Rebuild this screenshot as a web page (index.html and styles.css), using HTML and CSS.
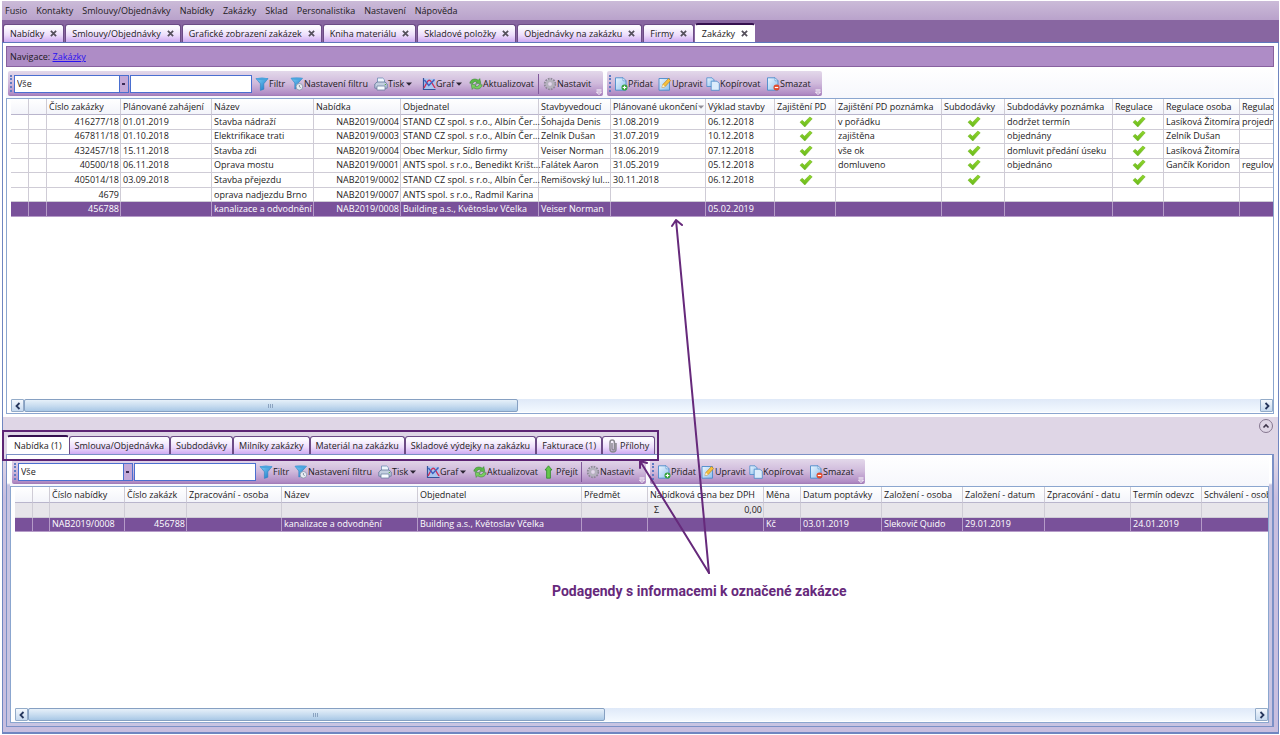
FILE: index.html
```html
<!DOCTYPE html>
<html lang="cs">
<head>
<meta charset="utf-8">
<title>Zakázky</title>
<link rel="stylesheet" href="styles.css">
</head>
<body>
<svg class="defs" aria-hidden="true">
  <defs>
    <linearGradient id="gBlue" x1="0" y1="0" x2="1" y2="1"><stop offset="0" stop-color="#7fd0f7"/><stop offset="1" stop-color="#1274c4"/></linearGradient>
    <linearGradient id="gPage" x1="0" y1="0" x2="1" y2="1"><stop offset="0" stop-color="#eaf5ff"/><stop offset="1" stop-color="#8fc0ec"/></linearGradient>
    <linearGradient id="gCheck" x1="0" y1="0" x2="0" y2="1"><stop offset="0" stop-color="#93d82c"/><stop offset="1" stop-color="#66b81a"/></linearGradient>
  </defs>
  <symbol id="i-filter" viewBox="0 0 14 14"><path d="M1 1.500h12L8.800 6.800v5.400L5.400 13.400V6.800z" fill="url(#gBlue)" stroke="#2b7fc0" stroke-width=".6"/><ellipse cx="7" cy="1.900" rx="6" ry="1.300" fill="#4ba3dd"/></symbol>
  <symbol id="i-filterset" viewBox="0 0 14 14"><path d="M1 1.200h11.500L8.200 6v5L4.800 12V6z" fill="url(#gBlue)" stroke="#2b7fc0" stroke-width=".6"/><ellipse cx="6.700" cy="1.600" rx="5.800" ry="1.200" fill="#4ba3dd"/><circle cx="9.400" cy="9.800" r="3.300" fill="#e9eef4" stroke="#8796a8" stroke-width=".8"/><path d="M9.400 8v1.800l1.300.8" fill="none" stroke="#607184" stroke-width=".7"/></symbol>
  <symbol id="i-print" viewBox="0 0 14 14"><path d="M3.500 6V1h5.200l1.800 1.800V6" fill="#eef5fc" stroke="#6f8db5" stroke-width=".8"/><path d="M.8 7 3 5h8l2.200 2v4.200H.8z" fill="#c3cfe0" stroke="#5f7598" stroke-width=".8"/><path d="M3 9h8v4H3z" fill="#f7fbff" stroke="#5f7598" stroke-width=".7"/><path d="M10.800 7.600H12" stroke="#49a83c"/></symbol>
  <symbol id="i-graph" viewBox="0 0 14 14"><path d="M2 1.500v10.500h11V2z" fill="#a9c4ee"/><path d="M1.500 1v11.500H13.500" fill="none" stroke="#34539a" stroke-width="1.200"/><path d="m2 11 3.500-6.500c1-1.600 2.500-1.600 3.500 0L13 11" fill="none" stroke="#d02d58" stroke-width="1.400"/><path d="m2.400 3 4.400 5.400L12.500 2.500" fill="none" stroke="#3b5fc0" stroke-width="1.400"/></symbol>
  <symbol id="i-refresh" viewBox="0 0 14 14"><path d="M.8 6.200C1.400 2.200 6 .8 9.300 3.200L10.800 1.600l1 5-5.200-.3 1.500-1.400C6.400 3.900 4.500 4.500 3.800 6.500z" fill="#5cb947" stroke="#2f7f2b" stroke-width=".5"/><path d="M13.200 7.800c-.6 4-5.200 5.400-8.500 3L3.200 12.400l-1-5 5.200.3-1.500 1.400c1.700 1 3.600.4 4.300-1.600z" fill="#79cf60" stroke="#2f7f2b" stroke-width=".5"/></symbol>
  <symbol id="i-gear" viewBox="0 0 14 14"><circle cx="7" cy="7" r="5.200" fill="none" stroke="#8d8a96" stroke-width="2" stroke-dasharray="1.700 1.020"/><circle cx="7" cy="7" r="3.300" fill="none" stroke="#b4b2bd" stroke-width="2.400"/><circle cx="7" cy="7" r="1.700" fill="#e2dae9"/></symbol>
  <symbol id="i-page" viewBox="0 0 14 14"><path d="M1.500.8h7.500L12 3.800v9.400H1.500z" fill="url(#gPage)" stroke="#4a8ac9" stroke-width=".9"/><path d="M9 .8v3h3z" fill="#fff" stroke="#4a8ac9" stroke-width=".6"/></symbol>
  <symbol id="i-add" viewBox="0 0 14 14"><use href="#i-page"/><circle cx="10.500" cy="10.500" r="3" fill="#35a13b"/><path d="M10.500 8.700v3.600M8.700 10.500h3.600" stroke="#fff" stroke-width="1.200"/></symbol>
  <symbol id="i-edit" viewBox="0 0 14 14"><path d="M1 1.500h10.500v11.700H1z" fill="url(#gPage)" stroke="#4a8ac9" stroke-width=".9"/><path d="m4 10.500.8-3L10.500 1.500l2.200 2L7 9.700z" fill="#f6c03c" stroke="#b27a1e" stroke-width=".6"/><path d="m4 10.500.8-3L7 9.700z" fill="#fff0cf"/></symbol>
  <symbol id="i-copy" viewBox="0 0 14 14"><path d="M.8.800h5.200l2 2v6.700H.8z" fill="url(#gPage)" stroke="#4a8ac9" stroke-width=".8"/><path d="M5.200 4.200H11l2.300 2.300v6.800H5.200z" fill="#dcecfb" stroke="#4a8ac9" stroke-width=".8"/></symbol>
  <symbol id="i-delete" viewBox="0 0 14 14"><use href="#i-page"/><circle cx="10.500" cy="10.500" r="3" fill="#e0492b"/><path d="M8.800 10.500h3.400" stroke="#fff" stroke-width="1.200"/></symbol>
  <symbol id="i-go" viewBox="0 0 14 14"><path d="M6.500.8 10 5H8.400v8.200H4.600V5H3z" fill="#66c64c" stroke="#2f8a2b" stroke-width=".8"/></symbol>
  <symbol id="i-clip" viewBox="0 0 10 14"><path d="M8 4v6a3 3 0 0 1-6 0V3.300a2.200 2.200 0 0 1 4.400 0v6.500a1.200 1.200 0 0 1-2.400 0V4" fill="none" stroke="#8b8991" stroke-width="1.500"/></symbol>
  <symbol id="i-x" viewBox="0 0 8 8"><path d="M1 1 7 7M7 1 1 7" stroke="#55505c" stroke-width="2"/></symbol>
  <symbol id="i-caret" viewBox="0 0 6 4"><path d="M0 .5h6L3 3.800z" fill="#2b2433"/></symbol>
  <symbol id="i-check" viewBox="0 0 14 12"><path d="M1 6.200 3.200 4.300 5.500 6.300 10.800 1 13.200 2.800 5.800 11z" fill="url(#gCheck)" stroke="#6fb424" stroke-width=".6" stroke-linejoin="round"/></symbol>
  <symbol id="i-more" viewBox="0 0 6 6"><path d="M.5 1h5" stroke="#fff"/><path d="M.5 3h5L3 5.600z" fill="none" stroke="#fff" stroke-width=".9"/></symbol>
  <symbol id="i-left" viewBox="0 0 8 8"><path d="M5.500 1 2.500 4l3 3" fill="none" stroke="#26365c" stroke-width="1.800"/></symbol>
  <symbol id="i-right" viewBox="0 0 8 8"><path d="m2.500 1 3 3-3 3" fill="none" stroke="#26365c" stroke-width="1.800"/></symbol>
  <symbol id="i-up" viewBox="0 0 8 8"><path d="M1.500 5.500 4 3l2.500 2.500" fill="none" stroke="#3c3348" stroke-width="1.600"/></symbol>
</svg>

<div class="app">
  <nav class="menu" aria-label="Hlavní nabídka">
    <button>Fusio</button><button>Kontakty</button><button>Smlouvy/Objednávky</button><button>Nabídky</button><button>Zakázky</button><button>Sklad</button><button>Personalistika</button><button>Nastavení</button><button>Nápověda</button>
  </nav>

  <div class="tabs" role="tablist">
    <button class="tab" role="tab">Nabídky<svg class="x"><use href="#i-x"/></svg></button>
    <button class="tab" role="tab">Smlouvy/Objednávky<svg class="x"><use href="#i-x"/></svg></button>
    <button class="tab" role="tab">Grafické zobrazení zakázek<svg class="x"><use href="#i-x"/></svg></button>
    <button class="tab" role="tab">Kniha materiálu<svg class="x"><use href="#i-x"/></svg></button>
    <button class="tab" role="tab">Skladové položky<svg class="x"><use href="#i-x"/></svg></button>
    <button class="tab" role="tab">Objednávky na zakázku<svg class="x"><use href="#i-x"/></svg></button>
    <button class="tab" role="tab">Firmy<svg class="x"><use href="#i-x"/></svg></button>
    <button class="tab active" role="tab" aria-selected="true">Zakázky<svg class="x"><use href="#i-x"/></svg></button>
  </div>

  <main class="frame">
    <section class="upper">
      <div class="crumbs">Navigace: <a href="#">Zakázky</a></div>
      <div class="toolrow">
        <div class="toolbar">
          <span class="grip"></span>
          <select class="view" aria-label="Pohled"><option>Vše</option></select>
          <input class="search" type="text" aria-label="Hledat">
          <button class="tool w-filter"><svg><use href="#i-filter"/></svg>Filtr</button>
          <button class="tool w-set"><svg><use href="#i-filterset"/></svg>Nastavení filtru</button>
          <button class="tool w-print"><svg><use href="#i-print"/></svg>Tisk<svg class="caret"><use href="#i-caret"/></svg></button>
          <button class="tool w-graph"><svg><use href="#i-graph"/></svg>Graf<svg class="caret"><use href="#i-caret"/></svg></button>
          <button class="tool w-refresh"><svg><use href="#i-refresh"/></svg>Aktualizovat</button>
          <span class="sep"></span>
          <button class="tool w-conf"><svg><use href="#i-gear"/></svg>Nastavit</button>
          <svg class="more"><use href="#i-more"/></svg>
        </div>
        <div class="toolbar">
          <span class="grip wide"></span>
          <button class="tool w-add"><svg><use href="#i-add"/></svg>Přidat</button>
          <button class="tool w-edit"><svg><use href="#i-edit"/></svg>Upravit</button>
          <button class="tool w-copy"><svg><use href="#i-copy"/></svg>Kopírovat</button>
          <button class="tool w-del"><svg><use href="#i-delete"/></svg>Smazat</button>
          <svg class="more"><use href="#i-more"/></svg>
        </div>
      </div>
      <div class="gridbox">
        <div class="scroller">
        <table class="grid orders">
          <colgroup><col class="c18"><col class="c18"><col class="c74"><col class="c91"><col class="c102"><col class="c87"><col class="c138"><col class="c72"><col class="c95"><col class="c69"><col class="c61"><col class="c106"><col class="c63"><col class="c108"><col class="c51"><col class="c76"><col class="c90"></colgroup>
          <thead><tr><th></th><th></th><th>Číslo zakázky</th><th>Plánované zahájení</th><th>Název</th><th>Nabídka</th><th>Objednatel</th><th>Stavbyvedoucí</th><th class="sorted">Plánované ukončení<svg class="caret"><use href="#i-caret"/></svg></th><th>Výklad stavby</th><th>Zajištění PD</th><th>Zajištění PD poznámka</th><th>Subdodávky</th><th>Subdodávky poznámka</th><th>Regulace</th><th>Regulace osoba</th><th>Regulace</th></tr></thead>
          <tbody>
            <tr><td></td><td></td><td class="r">416277/18</td><td>01.01.2019</td><td>Stavba nádraží</td><td class="r">NAB2019/0004</td><td>STAND CZ spol. s r.o., Albín Čer...</td><td>Šohajda Denis</td><td>31.08.2019</td><td>06.12.2018</td><td class="ok"><svg><use href="#i-check"/></svg></td><td>v pořádku</td><td class="ok"><svg><use href="#i-check"/></svg></td><td>dodržet termín</td><td class="ok"><svg><use href="#i-check"/></svg></td><td>Lasíková Žitomíra</td><td>projedn</td></tr>
            <tr><td></td><td></td><td class="r">467811/18</td><td>01.10.2018</td><td>Elektrifikace trati</td><td class="r">NAB2019/0003</td><td>STAND CZ spol. s r.o., Albín Čer...</td><td>Zelník Dušan</td><td>31.07.2019</td><td>10.12.2018</td><td class="ok"><svg><use href="#i-check"/></svg></td><td>zajištěna</td><td class="ok"><svg><use href="#i-check"/></svg></td><td>objednány</td><td class="ok"><svg><use href="#i-check"/></svg></td><td>Zelník Dušan</td><td></td></tr>
            <tr><td></td><td></td><td class="r">432457/18</td><td>15.11.2018</td><td>Stavba zdi</td><td class="r">NAB2019/0004</td><td>Obec Merkur, Sídlo firmy</td><td>Veiser Norman</td><td>18.06.2019</td><td>07.12.2018</td><td class="ok"><svg><use href="#i-check"/></svg></td><td>vše ok</td><td class="ok"><svg><use href="#i-check"/></svg></td><td>domluvit předání úseku</td><td class="ok"><svg><use href="#i-check"/></svg></td><td>Lasíková Žitomíra</td><td></td></tr>
            <tr><td></td><td></td><td class="r">40500/18</td><td>06.11.2018</td><td>Oprava mostu</td><td class="r">NAB2019/0001</td><td>ANTS spol. s r.o., Benedikt Krišt...</td><td>Falátek Aaron</td><td>31.05.2019</td><td>05.12.2018</td><td class="ok"><svg><use href="#i-check"/></svg></td><td>domluveno</td><td class="ok"><svg><use href="#i-check"/></svg></td><td>objednáno</td><td class="ok"><svg><use href="#i-check"/></svg></td><td>Gančík Koridon</td><td>regulov</td></tr>
            <tr><td></td><td></td><td class="r">405014/18</td><td>03.09.2018</td><td>Stavba přejezdu</td><td class="r">NAB2019/0002</td><td>STAND CZ spol. s r.o., Albín Čer...</td><td>Remišovský Iul...</td><td>30.11.2018</td><td>06.12.2018</td><td class="ok"><svg><use href="#i-check"/></svg></td><td></td><td class="ok"><svg><use href="#i-check"/></svg></td><td></td><td class="ok"><svg><use href="#i-check"/></svg></td><td></td><td></td></tr>
            <tr><td></td><td></td><td class="r">4679</td><td></td><td>oprava nadjezdu Brno</td><td class="r">NAB2019/0007</td><td>ANTS spol. s r.o., Radmil Karina</td><td></td><td></td><td></td><td></td><td></td><td></td><td></td><td></td><td></td><td></td></tr>
            <tr class="selected"><td></td><td></td><td class="r">456788</td><td></td><td>kanalizace a odvodnění</td><td class="r">NAB2019/0008</td><td>Building a.s., Květoslav Včelka</td><td>Veiser Norman</td><td></td><td>05.02.2019</td><td></td><td></td><td></td><td></td><td></td><td></td><td></td></tr>
          </tbody>
        </table>
        </div>
        <div class="hscroll">
          <button aria-label="Vlevo"><svg><use href="#i-left"/></svg></button>
          <div class="track"><div class="thumb"></div></div>
          <button aria-label="Vpravo"><svg><use href="#i-right"/></svg></button>
        </div>
      </div>
    </section>

    <section class="lower">
      <button class="collapse" aria-label="Sbalit"><svg><use href="#i-up"/></svg></button>
      <div class="subtabs" role="tablist">
        <button class="tab active" role="tab" aria-selected="true">Nabídka (1)</button>
        <button class="tab" role="tab">Smlouva/Objednávka</button>
        <button class="tab" role="tab">Subdodávky</button>
        <button class="tab" role="tab">Milníky zakázky</button>
        <button class="tab" role="tab">Materiál na zakázku</button>
        <button class="tab" role="tab">Skladové výdejky na zakázku</button>
        <button class="tab" role="tab">Fakturace (1)</button>
        <button class="tab clip" role="tab"><svg><use href="#i-clip"/></svg>Přílohy</button>
      </div>
      <div class="subpanel">
        <div class="toolrow">
          <div class="toolbar">
            <span class="grip"></span>
            <select class="view" aria-label="Pohled"><option>Vše</option></select>
            <input class="search" type="text" aria-label="Hledat">
            <button class="tool w-filter"><svg><use href="#i-filter"/></svg>Filtr</button>
            <button class="tool w-set"><svg><use href="#i-filterset"/></svg>Nastavení filtru</button>
            <button class="tool w-print"><svg><use href="#i-print"/></svg>Tisk<svg class="caret"><use href="#i-caret"/></svg></button>
            <button class="tool w-graph"><svg><use href="#i-graph"/></svg>Graf<svg class="caret"><use href="#i-caret"/></svg></button>
            <button class="tool w-refresh"><svg><use href="#i-refresh"/></svg>Aktualizovat</button>
            <button class="tool w-go"><svg><use href="#i-go"/></svg>Přejít</button>
            <span class="sep"></span>
            <button class="tool w-conf"><svg><use href="#i-gear"/></svg>Nastavit</button>
            <svg class="more"><use href="#i-more"/></svg>
          </div>
          <div class="toolbar">
            <span class="grip wide"></span>
            <button class="tool w-add"><svg><use href="#i-add"/></svg>Přidat</button>
            <button class="tool w-edit"><svg><use href="#i-edit"/></svg>Upravit</button>
            <button class="tool w-copy"><svg><use href="#i-copy"/></svg>Kopírovat</button>
            <button class="tool w-del"><svg><use href="#i-delete"/></svg>Smazat</button>
            <svg class="more"><use href="#i-more"/></svg>
          </div>
        </div>
        <div class="gridbox">
          <div class="scroller">
          <table class="grid offers">
            <colgroup><col class="c18"><col class="c17"><col class="c75"><col class="c62"><col class="c95"><col class="c136"><col class="c164"><col class="c66"><col class="c116"><col class="c37"><col class="c81"><col class="c81"><col class="c82"><col class="c86"><col class="c71"><col class="c90"></colgroup>
            <thead><tr><th></th><th></th><th>Číslo nabídky</th><th>Číslo zakázk</th><th>Zpracování - osoba</th><th>Název</th><th>Objednatel</th><th>Předmět</th><th>Nabídková cena bez DPH</th><th>Měna</th><th>Datum poptávky</th><th>Založení - osoba</th><th>Založení - datum</th><th>Zpracování - datu</th><th>Termín odevzc</th><th>Schválení - osob</th></tr></thead>
            <tbody>
              <tr class="sum"><td></td><td></td><td></td><td></td><td></td><td></td><td></td><td></td><td><div class="total"><span>Σ</span><span>0,00</span></div></td><td></td><td></td><td></td><td></td><td></td><td></td><td></td></tr>
              <tr class="selected"><td></td><td></td><td>NAB2019/0008</td><td class="r">456788</td><td></td><td>kanalizace a odvodnění</td><td>Building a.s., Květoslav Včelka</td><td></td><td></td><td>Kč</td><td>03.01.2019</td><td>Slekovič Quido</td><td>29.01.2019</td><td></td><td>24.01.2019</td><td></td></tr>
            </tbody>
          </table>
          </div>
          <div class="hscroll">
            <button aria-label="Vlevo"><svg><use href="#i-left"/></svg></button>
            <div class="track"><div class="thumb"></div></div>
            <button aria-label="Vpravo"><svg><use href="#i-right"/></svg></button>
          </div>
        </div>
      </div>
    </section>
  </main>

  <svg class="arrows" width="1280" height="735" aria-hidden="true">
    <g fill="none" stroke="#66297b" stroke-width="2" stroke-linecap="round" stroke-linejoin="round">
      <path d="M709 573 676 220M672 226l4-6 6 5"/>
      <path d="M709 573 640 461M640 468v-7l7 2"/>
    </g>
  </svg>
  <p class="note">Podagendy s informacemi k označené zakázce</p>
</div>
</body>
</html>
```
FILE: styles.css
```css
* { box-sizing: border-box; }
body {
  margin: 0;
  font: 9px/14px "Open Sans", "Noto Sans", sans-serif;
  color: #1d1a22;
  background: #fff;
}
button, input, select { font: inherit; color: inherit; margin: 0; padding: 0; border: 0; background: none; border-radius: 0; }
svg { display: block; flex: none; }
.defs { position: absolute; width: 0; height: 0; }

.app {
  position: relative;
  display: flex;
  flex-direction: column;
  min-height: 100vh;
  padding: 1px 1px 1px 2px;
}

/* menu and document tabs */
.menu {
  display: flex;
  gap: 9px;
  height: 19px;
  padding-left: 3px;
  background: linear-gradient(#cbbbd8, #b9a2cb);
}
.tabs {
  display: flex;
  align-items: flex-end;
  gap: 1px;
  height: 23px;
  padding-left: 1px;
  background: #8866a1;
  border-bottom: 1px solid #5f76bd;
}
.tab {
  display: flex;
  align-items: center;
  gap: 6px;
  height: 18px;
  padding: 0 6px;
  border: 1px solid #6c4b86;
  border-bottom: 0;
  border-radius: 3px 3px 0 0;
  background: linear-gradient(#fcfaff 15%, #ecdcfb 60%, #cfaaf2);
  white-space: nowrap;
}
.tab.active {
  height: 19px;
  background: #fff;
  border-color: #fff;
  border-top: 2px solid #35104f;
}
.x { width: 7px; height: 7px; }

/* outer frame */
.frame {
  flex: 1;
  display: flex;
  flex-direction: column;
  border: 1px solid #6f86c0;
  border-top: 0;
  border-bottom-width: 2px;
  background: #c8bedf;
}
.upper {
  flex: 367 1 0;
  display: flex;
  flex-direction: column;
  padding: 3px 4px 3px 3px;
  background: #fff;
}
.crumbs {
  height: 21px;
  padding-left: 3px;
  line-height: 20px;
  background: #ae8cc6;
  border: 1px solid #87619f;
}
.crumbs a { color: #2a12f0; }

/* tool bars */
.toolrow { display: flex; gap: 4px; height: 31px; padding: 4px 0 1px 2px; background: linear-gradient(#fff, #f6f7fc); }
.toolbar {
  position: relative;
  display: flex;
  align-items: center;
  height: 25px;
  border-radius: 2px;
  background: linear-gradient(#e3d8ea, #cfb9db 50%, #b08bc4 92%, #9f78b5);
}
.grip { width: 2px; height: 17px; margin: 0 2px; border-left: 2px dotted #5f7bc4; }
.grip.wide { margin-right: 3px; }
.view {
  appearance: none;
  width: 115px;
  height: 18px;
  padding-left: 2px;
  border: 1px solid #4a6fd0;
  background:
    linear-gradient(#3b2a54, #3b2a54) right 3px center / 3px 2px no-repeat,
    linear-gradient(90deg, #4a6fd0 1px, #c4a9d8 1px) right / 9px 100% no-repeat,
    #fff;
}
.search { width: 122px; height: 18px; margin: 0 3px 0 1px; border: 1px solid #4a6fd0; background: #fff; }
.tool { display: flex; align-items: center; height: 20px; white-space: nowrap; }
.tool svg { width: 14px; height: 14px; }
.tool .caret { width: 6px; height: 4px; margin-left: 2px; }
.w-filter { width: 35px; }
.w-set { width: 84px; }
.w-print { width: 48px; }
.w-graph { width: 47px; }
.w-refresh { width: 69px; }
.w-go { width: 39px; }
.w-conf { width: 60px; }
.w-add { width: 44px; }
.w-edit { width: 48px; }
.w-copy { width: 60px; }
.w-del { width: 56px; }
.sep { width: 1px; height: 20px; margin-right: 4px; background: #80599a; }
.more { position: absolute; right: 1px; bottom: 1px; width: 6px; height: 6px; }

/* data grids */
.gridbox {
  flex: 1;
  display: flex;
  flex-direction: column;
  min-height: 0;
  padding: 0 0 1px 4px;
  border: 1px solid #8ba6cf;
  background: #fff;
}
.scroller { flex: 1; overflow: hidden; }
.grid { table-layout: fixed; border-collapse: separate; border-spacing: 0; width: 0; }
.orders { height: 118px; }
.offers { height: 45px; }
.grid th, .grid td {
  height: 14px;
  padding: 0 1px 0 2px;
  line-height: 12px;
  font-weight: 400;
  text-align: left;
  white-space: nowrap;
  border-right: 1px solid #cfccd6;
  border-bottom: 1px solid #cfccd6;
}
.grid th {
  height: 16px;
  background: linear-gradient(#fff, #f3f4fa);
  border-bottom-color: #b9b5cc;
}
.grid .r { text-align: right; }
.sorted .caret { display: inline-block; width: 6px; height: 4px; margin-left: 1px; vertical-align: middle; opacity: .5; }
.ok svg { width: 14px; height: 12px; margin: 0 auto; }
.grid .selected td { color: #fff; background: #79519a; border-color: #b59bc8; }
.grid .sum td { background: #e7e5ea; }
.total { display: flex; justify-content: space-between; padding-left: 4px; }
.c17 { width: 17px; } .c18 { width: 18px; } .c37 { width: 37px; }
.c51 { width: 51px; } .c61 { width: 61px; } .c62 { width: 62px; }
.c63 { width: 63px; } .c66 { width: 66px; } .c69 { width: 69px; }
.c71 { width: 71px; } .c72 { width: 72px; } .c74 { width: 74px; }
.c75 { width: 75px; } .c76 { width: 76px; } .c81 { width: 81px; }
.c82 { width: 82px; } .c86 { width: 86px; } .c87 { width: 87px; }
.c90 { width: 90px; } .c91 { width: 91px; } .c95 { width: 95px; }
.c102 { width: 102px; } .c106 { width: 106px; } .c108 { width: 108px; }
.c116 { width: 116px; } .c136 { width: 136px; } .c138 { width: 138px; }
.c164 { width: 164px; }

.hscroll { display: flex; height: 13px; background: linear-gradient(#dfe9f8, #f3f9ff); }
.hscroll button {
  display: flex;
  align-items: center;
  justify-content: center;
  width: 13px;
  border: 1px solid #93abc8;
  border-radius: 1px;
  background: linear-gradient(#f4f8fd, #c6d9ef);
}
.hscroll svg { width: 8px; height: 8px; }
.track { flex: 1; display: flex; }
.thumb {
  width: 40%;
  border: 1px solid #86a0c2;
  border-radius: 2px;
  background:
    repeating-linear-gradient(90deg, #8ba3c0 0 1px, transparent 1px 2px) center / 6px 4px no-repeat,
    linear-gradient(#e6f0f9, #c9ddf0 50%, #a9c8e6);
}
.lower .thumb { width: 47%; }

/* lower pane */
.lower {
  position: relative;
  flex: 292 1 0;
  display: flex;
  flex-direction: column;
  padding: 17px 4px 5px 3px;
  background: linear-gradient(#dfd6e6 0 40px, #c8bedf 80px);
}
.collapse {
  position: absolute;
  top: 2px;
  right: 5px;
  display: flex;
  align-items: center;
  justify-content: center;
  width: 14px;
  height: 14px;
  border: 1px solid #85768f;
  border-radius: 50%;
}
.collapse svg { width: 8px; height: 8px; }
.subtabs { position: relative; z-index: 1; align-self: flex-start; display: flex; align-items: flex-end; height: 20px; padding-left: 1px; }
.subtabs .tab { padding: 0 5px; }
.subtabs .tab.active { padding: 0 6px; }
.subtabs .clip { gap: 2px; }
.clip svg { width: 10px; height: 14px; }
.subtabs::after {
  content: "";
  position: absolute;
  left: -4px;
  right: -4px;
  top: -4px;
  height: 27px;
  border: 2px solid #5d2474;
  pointer-events: none;
}
.subpanel {
  flex: 1;
  display: flex;
  flex-direction: column;
  padding: 0 3px 3px;
  border: 2px solid #7b90c6;
  border-width: 1px 2px 1px 1px;
  background: linear-gradient(#fff 0 28px, #c8c4e2 30px);
}

/* annotation */
.arrows { position: absolute; left: 0; top: 0; z-index: 2; pointer-events: none; }
.note {
  position: absolute;
  left: 552px;
  top: 582px;
  margin: 0;
  font: 700 14px/18px Roboto, sans-serif;
  color: #66297b;
  white-space: nowrap;
}
```
